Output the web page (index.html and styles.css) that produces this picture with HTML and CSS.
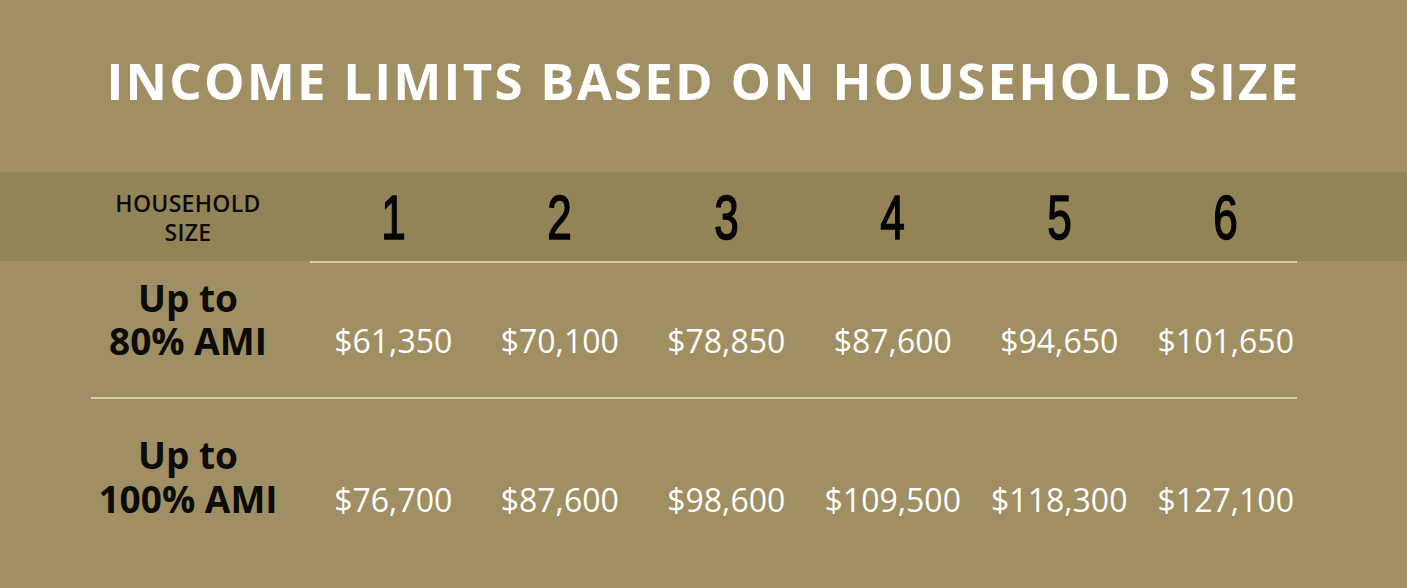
FILE: index.html
```html
<!DOCTYPE html>
<html lang="en">
<head>
<meta charset="utf-8">
<title>Income Limits</title>
<link rel="stylesheet" href="styles.css">
</head>
<body>
<div class="page">
  <h1 class="title">INCOME LIMITS BASED ON HOUSEHOLD SIZE</h1>
  <div class="band">
    <div class="grid head">
      <div class="label small">HOUSEHOLD<br>SIZE</div>
      <div class="num"><span>1</span></div>
      <div class="num"><span>2</span></div>
      <div class="num"><span>3</span></div>
      <div class="num"><span>4</span></div>
      <div class="num"><span>5</span></div>
      <div class="num"><span>6</span></div>
    </div>
  </div>
  <div class="line line-head"></div>
  <div class="grid row row1">
    <div class="label big">Up to<br>80% AMI</div>
    <div class="val">$61,350</div>
    <div class="val">$70,100</div>
    <div class="val">$78,850</div>
    <div class="val">$87,600</div>
    <div class="val">$94,650</div>
    <div class="val">$101,650</div>
  </div>
  <div class="line line-row"></div>
  <div class="grid row row2">
    <div class="label big">Up to<br>100% AMI</div>
    <div class="val">$76,700</div>
    <div class="val">$87,600</div>
    <div class="val">$98,600</div>
    <div class="val">$109,500</div>
    <div class="val">$118,300</div>
    <div class="val">$127,100</div>
  </div>
</div>
</body>
</html>
```
FILE: styles.css
```css
html, body {
  margin: 0;
  padding: 0;
  background: #9f8f62;
}
.page {
  width: 1407px;
  height: 588px;
  overflow: hidden;
  background: #9f8f62;
  font-family: "Open Sans", "DejaVu Sans", sans-serif;
}
.title {
  margin: 0;
  height: 172px;
  box-sizing: border-box;
  padding-top: 52px;
  text-align: center;
  color: #ffffff;
  font-size: 51px;
  font-weight: 700;
  line-height: 56px;
  letter-spacing: 2.2px;
}
.band {
  background: #938458;
  height: 89px;
}
.grid {
  display: grid;
  grid-template-columns: 219px repeat(6, 1fr);
  margin-left: 91px;
  width: 1218px;
}
.head {
  height: 89px;
  align-items: center;
}
.label {
  text-align: center;
  padding-right: 25px;
  color: #0c0b08;
  font-weight: 700;
}
.small {
  font-size: 23px;
  font-weight: 600;
  line-height: 29px;
  letter-spacing: 0.3px;
  padding-top: 3px;
}
.num {
  text-align: center;
  font-family: "Liberation Sans", Arial, sans-serif;
  font-size: 63px;
  font-weight: 400;
  line-height: 70px;
  color: #050505;
}
.num span {
  display: inline-block;
  transform: scaleX(0.7);
  -webkit-text-stroke: 1.6px #050505;
}
.line {
  height: 2px;
  background: #d6ccb2;
}
.line-head {
  margin-left: 310px;
  width: 987px;
}
.line-row {
  margin-left: 91px;
  width: 1206px;
}
.row {
  align-items: start;
  box-sizing: border-box;
}
.row1 {
  height: 134px;
  padding-top: 13px;
}
.row2 {
  height: 189px;
  padding-top: 34px;
}
.big {
  font-size: 37px;
  line-height: 43px;
}
.row2 .big {
  line-height: 44px;
}
.val {
  text-align: center;
  color: #ffffff;
  font-size: 32px;
  line-height: 43px;
  font-weight: 400;
}
.row1 .val {
  padding-top: 43px;
}
.row2 .val {
  padding-top: 45px;
}
```
